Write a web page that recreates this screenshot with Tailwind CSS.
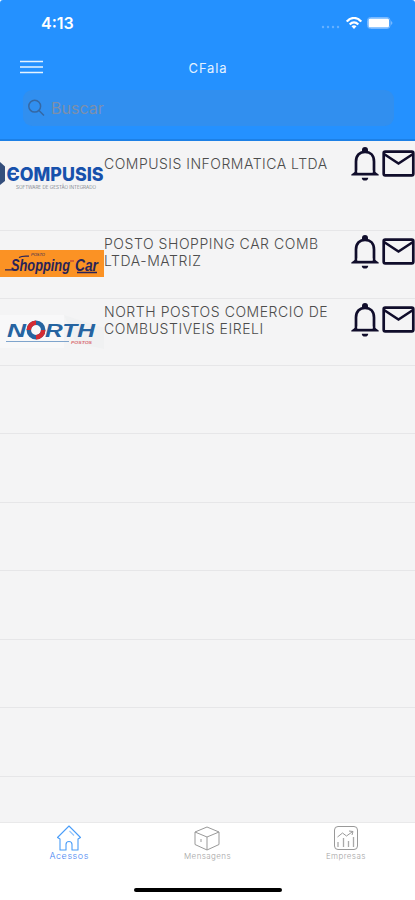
<!DOCTYPE html>
<html lang="pt-BR">
<head>
<meta charset="utf-8">
<title>CFala</title>
<script src="https://cdn.jsdelivr.net/npm/@tailwindcss/browser@4"></script>
</head>
<body class="bg-white">
<svg class="hidden">
  <symbol id="bell" viewBox="0 0 28 36">
    <path d="M5 28V15.500C5 9 9 5.800 14 5.800S23 9 23 15.500V28" fill="none" stroke="#100d2b" stroke-width="2.700"/>
    <path d="M11 6V4a3 3 0 0 1 6 0V6zM.3 29.500V28.600L4 25.800H24L27.700 28.600V29.500Z" fill="#100d2b"/>
    <path d="M6.300 26.800V24.500H21.700V26.800Z" fill="#f4f4f5"/>
    <path d="M10.800 31.800H17.200a3.200 2.800 0 0 1-6.400 0z" fill="#100d2b"/>
  </symbol>
  <symbol id="mail" viewBox="0 0 33 27">
    <rect x="1.700" y="1.700" width="29.600" height="23.600" rx="1.500" fill="none" stroke="#100d2b" stroke-width="2.700"/>
    <path d="M2 4L16.500 13.500L31 4" fill="none" stroke="#100d2b" stroke-width="2.600"/>
  </symbol>
</svg>
<div class="w-[415px] h-[900px] flex flex-col overflow-hidden bg-white font-['Inter',sans-serif]">
  <header class="h-[141px] shrink-0 bg-[#2491ff] border-b-2 border-[#1c80e6] rounded-t-[3px] flex flex-col">
    <div class="h-[46px] pl-[41px] pr-[21px] flex items-center justify-between text-white">
      <span class="text-[16px] leading-none font-semibold">4:13</span>
      <div class="flex items-center gap-[5px]">
        <svg width="20" height="4" class="mt-[8px]" fill="#67b1ff"><circle cx="2" cy="2" r="1.200"/><circle cx="7" cy="2" r="1.200"/><circle cx="12" cy="2" r="1.200"/><circle cx="17" cy="2" r="1.200"/></svg>
        <svg width="16" height="12" viewBox="0 0 16 12" fill="none" stroke="#fff" stroke-width="2.200"><path d="M.8 4.600C5-.3 11-.3 15.200 4.600M3.700 7.500c2.600-2.800 6-2.800 8.600 0"/><path d="M5.500 9.300c1.500-1.500 3.500-1.500 5 0L8 12z" fill="#fff" stroke="none"/></svg>
        <svg width="26" height="12" viewBox="0 0 26 12" class="mr-[1px]"><rect x=".5" y=".5" width="22.500" height="11" rx="3" fill="none" stroke="#79b9ff"/><rect x="1.500" y="1.500" width="20.500" height="9" rx="1.500" fill="#fff"/><path d="M24.300 4v4q2-2 0-4" fill="#9bcaff"/></svg>
      </div>
    </div>
    <div class="h-[44px] px-5 grid grid-cols-3 items-center">
      <svg width="23" height="14" viewBox="0 0 23 14" stroke="#e5f4ff" stroke-width="1.600" class="mb-[2px]"><path d="M0 1.500H23M0 7H23M0 12.500H23"/></svg>
      <h1 class="text-center text-[13px] leading-none tracking-[0.85px] pl-[1px] text-[#e3f1ff]">CFala</h1>
    </div>
    <div class="ml-[23px] mr-[21px] h-[36px] rounded-[9px] bg-[#318fef] flex items-center pl-[5px] gap-[6px] pb-[1px]">
      <svg width="17" height="18" viewBox="0 0 17 18" fill="none" stroke="#3568a4" stroke-width="1.500"><circle cx="6.700" cy="7.200" r="5.900"/><path d="M11 11.500L16 16.500"/></svg>
      <span class="text-[16px] leading-none text-[#7c8fac]">Buscar</span>
    </div>
  </header>

  <main class="flex-1 min-h-0 overflow-hidden bg-[#f4f4f5] text-[#4c4c4c] text-[14px] leading-[17px] font-light">
    <div class="h-[90px] border-b border-[#e6e6e8] flex">
      <svg class="w-[104px] h-[34px] mt-[18px] shrink-0" viewBox="0 0 104 34">
        <path d="M0 3L5 7.500V22L0 26Z" fill="#344e7c"/>
        <text x="6.500" y="21.500" textLength="97" lengthAdjust="spacingAndGlyphs" font-family="Inter, sans-serif" font-weight="800" font-size="18.500" fill="#1751ac">COMPUSIS</text>
        <path d="M9 14.800H16" stroke="#1751ac" stroke-width="2"/>
        <text x="16" y="30" textLength="80" lengthAdjust="spacingAndGlyphs" font-family="Inter, sans-serif" font-size="4.500" fill="#606570">SOFTWARE DE GESTÃO INTEGRADO</text>
      </svg>
      <p class="mt-[14px] w-[247px] shrink-0 tracking-[0.5px] whitespace-nowrap">COMPUSIS INFORMATICA LTDA</p>
      <svg class="w-[28px] h-[36px] mt-[5px] shrink-0"><use href="#bell"/></svg>
      <svg class="w-[33px] h-[27px] mt-[9px] ml-[3px] shrink-0"><use href="#mail"/></svg>
    </div>
    <div class="h-[68px] border-b border-[#e6e6e8] flex">
      <svg class="w-[104px] h-[27px] mt-[19px] shrink-0 bg-[#fb9224]" viewBox="0 0 104 27">
        <g font-family="'Liberation Sans', sans-serif" font-weight="700" font-style="italic" fill="#292358">
          <text x="11" y="20.500" textLength="59" lengthAdjust="spacingAndGlyphs" font-size="17">Shopping</text>
          <text x="75" y="20.500" textLength="23" lengthAdjust="spacingAndGlyphs" font-size="17">Car</text>
          <text x="31" y="6" textLength="14" lengthAdjust="spacingAndGlyphs" font-size="3.500" font-weight="400">POSTO</text>
        </g>
        <path d="M5 19.800H14M19 7.500Q22 5.600 29 6.200M77 22.500H97" fill="none" stroke="#292358" stroke-width="1.300"/>
        <path d="M70 11H74" stroke="#c04436" stroke-width="1.300"/>
      </svg>
      <p class="mt-[4px] w-[247px] shrink-0 tracking-[0.55px] whitespace-nowrap">POSTO SHOPPING CAR COMB<br>LTDA-MATRIZ</p>
      <svg class="w-[28px] h-[36px] mt-[3px] shrink-0"><use href="#bell"/></svg>
      <svg class="w-[33px] h-[27px] mt-[7px] ml-[3px] shrink-0"><use href="#mail"/></svg>
    </div>
    <div class="h-[67px] border-b border-[#e6e6e8] flex">
      <svg class="w-[104px] h-[38px] mt-[14px] shrink-0" viewBox="0 0 104 38">
        <path d="M0 2H64V35H0Z" fill="#f8f8f9"/><path d="M64 2L104 15V36L76 30Z" fill="#f0f1f2"/>
        <g font-family="'Liberation Sans', sans-serif" font-weight="700" font-style="italic" font-size="18" fill="#2664a1">
          <text x="7" y="24" textLength="19" lengthAdjust="spacingAndGlyphs">N</text>
          <text x="45" y="24" textLength="50" lengthAdjust="spacingAndGlyphs">RTH</text>
        </g>
        <g fill="none" stroke-width="4.500"><circle cx="36" cy="17" r="7.200" stroke="#2664a1"/><path d="M28.800 17A7.200 7.200 0 0 1 36 9.800M43.200 17A7.200 7.200 0 0 1 36 24.200" stroke="#d52c32"/></g>
        <path d="M6 28.500H69" stroke="#7fa4cc" stroke-width="1"/>
        <text x="71" y="30.500" textLength="21" lengthAdjust="spacingAndGlyphs" font-family="'Liberation Sans', sans-serif" font-style="italic" font-weight="700" font-size="4" fill="#d96d72">POSTOS</text>
      </svg>
      <p class="mt-[4px] w-[247px] shrink-0 tracking-[0.55px] whitespace-nowrap">NORTH POSTOS COMERCIO DE<br>COMBUSTIVEIS EIRELI</p>
      <svg class="w-[28px] h-[36px] mt-[3px] shrink-0"><use href="#bell"/></svg>
      <svg class="w-[33px] h-[27px] mt-[7px] ml-[3px] shrink-0"><use href="#mail"/></svg>
    </div>
    <div class="h-[68px] border-b border-[#e6e6e8]"></div>
    <div class="h-[69px] border-b border-[#e6e6e8]"></div>
    <div class="h-[68px] border-b border-[#e6e6e8]"></div>
    <div class="h-[69px] border-b border-[#e6e6e8]"></div>
    <div class="h-[68px] border-b border-[#e6e6e8]"></div>
    <div class="h-[69px] border-b border-[#e6e6e8]"></div>
  </main>

  <nav class="h-[78px] shrink-0 bg-white border-t border-[#e9e9ea] flex flex-col justify-between items-center pb-[8px]">
    <div class="w-full grid grid-cols-3 pt-[2px] text-[8px] leading-[9px] text-[#a5a5a5] font-light">
      <div class="flex flex-col items-center text-[#4b87f3]">
        <svg width="26" height="26" viewBox="0 0 26 26" fill="none" stroke="#4a9df8" stroke-width="1.100" stroke-linejoin="round"><path d="M1.500 12.500L13 1L24.500 12.500L22 14V25H16V19.500a3 3 0 0 0-6 0V25H4V14Z"/><path d="M13.500 6L18 10.500" stroke-opacity=".6"/></svg>
        <span class="text-[9px] tracking-[0.55px]">Acessos</span>
      </div>
      <div class="flex flex-col items-center">
        <svg width="26" height="26" viewBox="0 0 26 26" fill="none" stroke="#999" stroke-width="1" stroke-linejoin="round"><path d="M1 7L13 2L25 7V19.500L13 25L1 19.500ZM1 7L13 12L25 7M13 12V25M7 14V17"/></svg>
        <span class="tracking-[0.4px] mt-px">Mensagens</span>
      </div>
      <div class="flex flex-col items-center">
        <svg width="26" height="26" viewBox="0 0 26 26" fill="none" stroke="#999" stroke-width="1"><rect x="1.500" y="1.500" width="23" height="23" rx="3.500"/><path d="M4.500 12L9.500 8L13.500 11L19 7M16 6L20 6.500L19 10"/><path d="M5 17V22M10.500 13V22M15.500 16V22M20.500 12V22" stroke-width="1.300" stroke="#aaa"/></svg>
        <span class="tracking-[0.4px] mt-px">Empresas</span>
      </div>
    </div>
    <div class="w-[148px] h-[4px] rounded-full bg-black"></div>
  </nav>
</div>
</body>
</html>
